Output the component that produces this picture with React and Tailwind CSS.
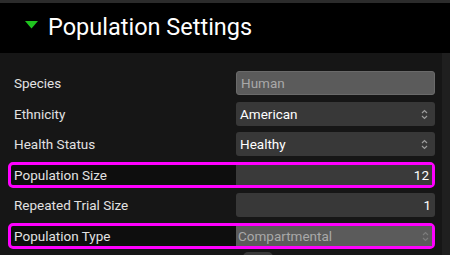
import React from 'react';

const font = { fontFamily: 'Roboto, "Liberation Sans", sans-serif' };

function Spinner({ dim }) {
  return (
    <svg width="7" height="11" viewBox="0 0 7 11" className="shrink-0">
      <path d="M1 4 L3.5 1.5 L6 4" fill="none" stroke={dim ? '#7c7c7c' : '#9c9c9c'} strokeWidth="1.2" />
      <path d="M1 7 L3.5 9.5 L6 7" fill="none" stroke={dim ? '#7c7c7c' : '#9c9c9c'} strokeWidth="1.2" />
    </svg>
  );
}

function Field({ value, disabled, select, right }) {
  return (
    <div
      className={`flex items-center rounded-[3px] px-[4px] text-[13.5px] w-[199px] h-[24px] ${
        disabled ? 'bg-[#5b5b5b] border border-[#6a6a6a] text-[#a9a9a9]' : 'bg-[#383838] text-white'
      } ${right ? 'justify-end' : 'justify-between'}`}
    >
      <span>{value}</span>
      {select && <span className="pr-[3px] flex"><Spinner dim={disabled} /></span>}
    </div>
  );
}

function Row({ label, children, className = '' }) {
  return (
    <div className={`flex items-center h-[24px] ${className}`}>
      <div className="w-[236px] pl-[14px] text-[13.5px] text-[#e2e2e2]">{label}</div>
      {children}
    </div>
  );
}

function HighlightRow({ label, children, className = '' }) {
  return (
    <div
      className={`ml-[8px] w-[427px] h-[26px] border-[3px] border-[#ff00ff] rounded-[5px] bg-[#0e0e0e] flex items-center ${className}`}
    >
      <div className="w-[225px] pl-[3px] text-[13.5px] text-[#e2e2e2]">{label}</div>
      {children}
    </div>
  );
}

export default function App() {
  return (
    <div className="w-[450px] h-[255px] overflow-hidden bg-[#2b2b2b] flex flex-col" style={font}>
      <div className="h-[3px] shrink-0" />
      {/* Header */}
      <div className="h-[50px] shrink-0 bg-black flex items-center">
        <svg width="13" height="8" viewBox="0 0 13 8" className="ml-[25px] mb-[6px]">
          <polygon points="0,0 13,0 6.5,7.5" fill="#1fc41f" />
        </svg>
        <span className="ml-[10px] text-[23.5px] text-white leading-none">Population Settings</span>
      </div>

      {/* Body */}
      <div className="flex flex-1">
        <div className="w-[442px] bg-[#161616] flex flex-col pt-[18px]">
          <Row label="Species">
            <Field value="Human" disabled />
          </Row>
          <Row label="Ethnicity" className="mt-[7px]">
            <Field value="American" select />
          </Row>
          <Row label="Health Status" className="mt-[6px]">
            <Field value="Healthy" select />
          </Row>
          <HighlightRow label="Population Size" className="mt-[6px]">
            <div className="flex-1 h-full bg-[#3a3a3a] flex items-center justify-end pr-[3px] text-[13.5px] text-white">
              12
            </div>
          </HighlightRow>
          <Row label="Repeated Trial Size" className="mt-[5px]">
            <Field value="1" right />
          </Row>
          <HighlightRow label="Population Type" className="mt-[6px]">
            <div className="flex-1 h-full bg-[#5b5b5b] flex items-center justify-between pl-[2px] pr-[3px] text-[13.5px] text-[#a9a9a9]">
              <span>Compartmental</span>
              <Spinner dim />
            </div>
          </HighlightRow>
          <div className="ml-[243px] mt-[3px] w-[30px] h-[10px] rounded-full bg-[#3a3a3a]" />
        </div>
        <div className="flex-1 bg-[#1f1f1f]" />
      </div>
    </div>
  );
}
